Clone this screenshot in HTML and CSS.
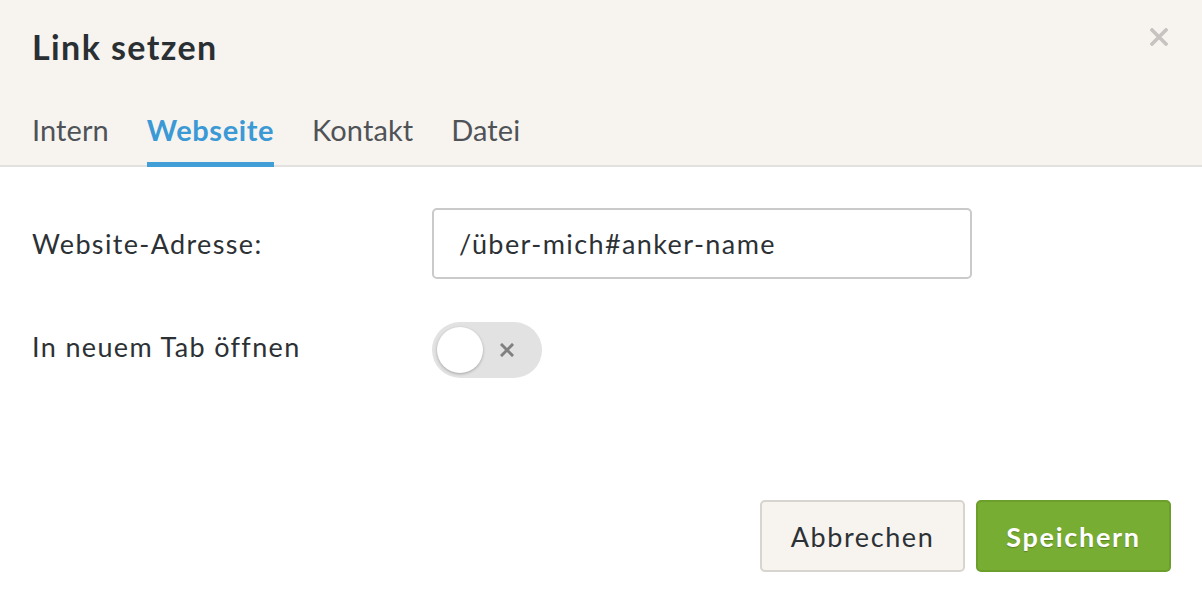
FILE: index.html
```html
<!DOCTYPE html>
<html lang="de">
<head>
<meta charset="utf-8">
<title>Link setzen</title>
<link rel="stylesheet" href="styles.css">
</head>
<body>
<div class="dialog">
  <header class="header">
    <h1 class="title">Link setzen</h1>
    <button class="close" aria-label="Schließen">
      <svg width="18" height="18" viewBox="0 0 18 18"><path d="M2 2 L16 16 M16 2 L2 16" stroke="#c6c3c0" stroke-width="3.6" stroke-linecap="square"/></svg>
    </button>
    <nav class="tabs">
      <span class="tab">Intern</span>
      <span class="tab active">Webseite</span>
      <span class="tab">Kontakt</span>
      <span class="tab">Datei</span>
    </nav>
  </header>
  <main class="body">
    <div class="row">
      <label class="label">Website-Adresse:</label>
      <div class="input">/über-mich#anker-name</div>
    </div>
    <div class="row row-toggle">
      <label class="label">In neuem Tab öffnen</label>
      <div class="toggle">
        <span class="knob"></span>
        <svg class="toggle-x" width="14" height="14" viewBox="0 0 14 14"><path d="M2 2 L12 12 M12 2 L2 12" stroke="#808080" stroke-width="3" stroke-linecap="square"/></svg>
      </div>
    </div>
  </main>
  <footer class="footer">
    <button class="btn btn-cancel">Abbrechen</button>
    <button class="btn btn-save">Speichern</button>
  </footer>
</div>
</body>
</html>
```

FILE: styles.css
```css
* { box-sizing: border-box; }
html, body { margin: 0; padding: 0; background: #fff; }
body {
  font-family: Lato, "Open Sans", sans-serif;
  color: #2c3135;
  width: 1202px;
  height: 598px;
  overflow: hidden;
}
.dialog {
  display: flex;
  flex-direction: column;
  height: 598px;
}
.header {
  position: relative;
  background: #f7f4f0;
  border-bottom: 2px solid #e2e1df;
  padding: 0 32px;
  height: 167px;
}
.title {
  margin: 0;
  padding-top: 26px;
  font-size: 34px;
  line-height: 42px;
  font-weight: 700;
  color: #2a2f33;
  letter-spacing: 1.4px;
}
.close {
  position: absolute;
  top: 28px;
  right: 34px;
  width: 18px;
  height: 18px;
  padding: 0;
  border: 0;
  background: transparent;
  display: block;
}
.close svg { display: block; }
.tabs {
  display: flex;
  gap: 38px;
  margin-top: 44px;
}
.tab {
  font-size: 29px;
  line-height: 36px;
  color: #4f5357;
  padding-bottom: 14px;
  border-bottom: 5px solid transparent;
  letter-spacing: 0.1px;
}
.tab.active {
  color: #3b99d5;
  font-weight: 700;
  letter-spacing: 0.6px;
  border-bottom-color: #419ed6;
}
.body {
  padding: 41px 32px 0 32px;
  display: flex;
  flex-direction: column;
  gap: 43px;
}
.row {
  display: grid;
  grid-template-columns: 400px 540px;
  align-items: center;
}
.label {
  font-size: 27px;
  line-height: 32px;
  color: #2c3135;
  letter-spacing: 1.35px;
}
.row-toggle .label { margin-top: -6px; }
.input {
  height: 71px;
  border: 2px solid #cacaca;
  border-radius: 5px;
  background: #fff;
  padding: 0 25px;
  display: flex;
  align-items: center;
  font-size: 27px;
  color: #2c3135;
  letter-spacing: 1.4px;
}
.toggle {
  width: 110px;
  height: 56px;
  border-radius: 28px;
  background: #e2e2e2;
  display: flex;
  align-items: center;
  padding: 0 5px;
  gap: 17px;
}
.knob {
  width: 46px;
  height: 46px;
  border-radius: 50%;
  background: #fff;
  box-shadow: 0 1px 3px rgba(0,0,0,0.28);
}
.toggle-x { display: block; }
.footer {
  margin-top: auto;
  padding: 0 31px 26px 0;
  display: flex;
  justify-content: flex-end;
  gap: 11px;
}
.btn {
  height: 72px;
  border-radius: 5px;
  font-family: Lato, "Open Sans", sans-serif;
  font-size: 27px;
  padding: 0;
}
.btn-cancel {
  width: 205px;
  background: #f7f4f0;
  border: 2px solid #d8d4d0;
  color: #2c3135;
  letter-spacing: 1.6px;
}
.btn-save {
  width: 195px;
  background: #78ad34;
  border: 2px solid #6c9e2c;
  color: #fff;
  font-weight: 700;
  letter-spacing: 1.7px;
  text-shadow: 0 1px 1px rgba(0,0,0,0.25);
}
```
